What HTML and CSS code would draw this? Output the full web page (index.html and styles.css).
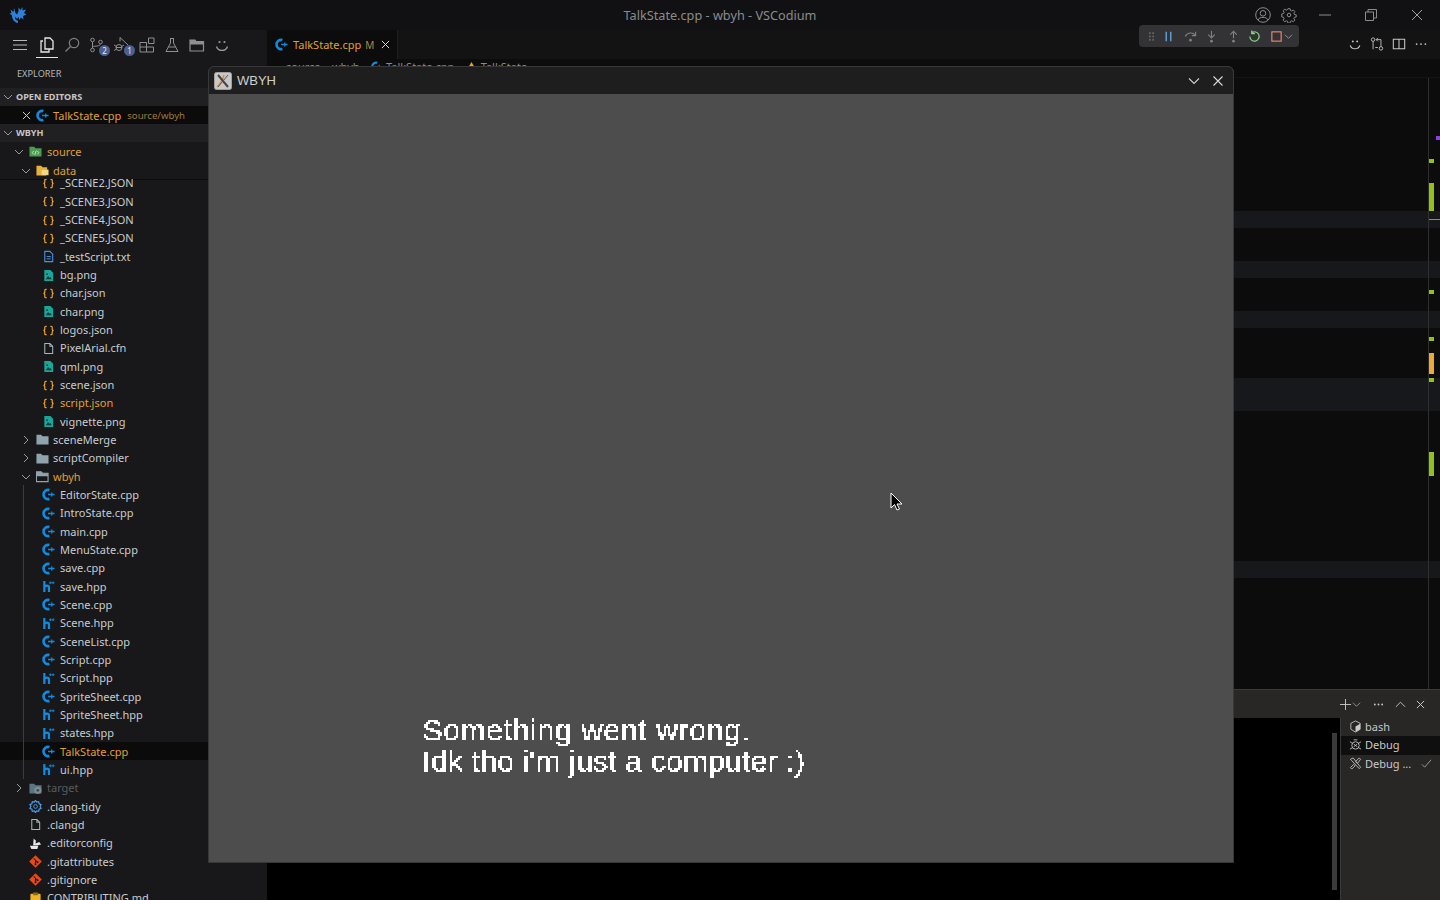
FILE: index.html
```html
<!DOCTYPE html>
<html lang="en">
<head>
<meta charset="utf-8">
<title>TalkState.cpp - wbyh - VSCodium</title>
<link rel="stylesheet" href="styles.css">
</head>
<body>
<svg class="defs" width="0" height="0" aria-hidden="true">
  <defs>
    <filter id="pixel" x="0" y="0" width="1" height="1" color-interpolation-filters="sRGB">
      <feFlood x="0" y="0" width="1" height="1" flood-color="#fff"/>
      <feComposite width="2" height="2"/>
      <feTile result="grid"/>
      <feComposite in="SourceGraphic" in2="grid" operator="in" result="dots"/>
      <feOffset in="dots" dx="1" dy="0" result="d1"/>
      <feOffset in="dots" dx="0" dy="1" result="d2"/>
      <feOffset in="dots" dx="1" dy="1" result="d3"/>
      <feMerge result="m"><feMergeNode in="dots"/><feMergeNode in="d1"/><feMergeNode in="d2"/><feMergeNode in="d3"/></feMerge>
      <feComponentTransfer in="m"><feFuncA type="discrete" tableValues="0 1 1 1"/></feComponentTransfer>
    </filter>
    <symbol id="cpp" viewBox="0 0 14 14"><path d="M8 2.200A5 5 0 1 0 8 11.800" fill="none" stroke="#0f8ce0" stroke-width="2.800"/><path d="M6.500 7h7M10.500 4.800v4.400" stroke="#0f8ce0" stroke-width="1.400" fill="none"/></symbol>
    <symbol id="hpp" viewBox="0 0 14 14"><path d="M2.500 1v12M2.500 7.500C3.500 5.500 7.500 5.300 7.500 8v5" fill="none" stroke="#0f8ce0" stroke-width="2.400"/><path d="M7.500 3h6M9 1.500v3M12 1.500v3" stroke="#0f8ce0" stroke-width="1" fill="none"/></symbol>
    <symbol id="json" viewBox="0 0 14 14"><path d="M5 2.500H4Q3 2.500 3 3.500V5.500Q3 7 1.500 7Q3 7 3 8.500V10.500Q3 11.500 4 11.500H5M9 2.500H10Q11 2.500 11 3.500V5.500Q11 7 12.500 7Q11 7 11 8.500V10.500Q11 11.500 10 11.500H9" fill="none" stroke="#e9a22c" stroke-width="1.300"/></symbol>
    <symbol id="png" viewBox="0 0 14 14"><path d="M2.500 1H9L12 4V13H2.500Z" fill="#1aa79a"/><path d="M4 11L6.500 7.500 8 9.500 9 8.500 10.500 11Z" fill="#0b3a38"/><circle cx="5.500" cy="5.500" r="1" fill="#0b3a38"/></symbol>
    <symbol id="txt" viewBox="0 0 14 14"><path d="M3 1.500H8.500L11.500 4.500V12.500H3Z" fill="none" stroke="#4a90d9" stroke-width="1.200"/><path d="M5 7h4.500M5 9.500h4.500" stroke="#4a90d9"/></symbol>
    <symbol id="file" viewBox="0 0 14 14"><path d="M3 1.500H8.500L11.500 4.500V12.500H3ZM8.500 1.500V4.500H11.500" fill="none" stroke="#a7b5bd" stroke-width="1.100"/></symbol>
    <symbol id="folder" viewBox="0 0 14 14"><path d="M.5 2H5.500L7 3.500H13.500V12.500H.5Z" fill="#90a4ae"/></symbol>
    <symbol id="folderopen" viewBox="0 0 14 14"><path d="M.5 2H5.500L7 3.500H13V12.500H.5ZM.5 6H13" fill="none" stroke="#90a4ae" stroke-width="1.200"/><path d="M.5 2H5.500L7 3.500H13V6H.5Z" fill="#90a4ae"/></symbol>
    <symbol id="foldersrc" viewBox="0 0 14 14"><path d="M.5 2H5.500L7 3.500H13.500V12.500H.5Z" fill="#4d9a51"/><path d="M5 6.500L3.500 8.300 5 10M9 6.500L10.500 8.300 9 10M7.800 6L6.300 10.500" fill="none" stroke="#c4ecc4"/></symbol>
    <symbol id="folderdata" viewBox="0 0 14 14"><path d="M.5 12.500V2H5.500L7 3.500H12V6H3.500L.5 12.500H11L13.500 6H3.500" fill="#e7b23c"/><rect x="6" y="6.500" width="7.500" height="5.500" fill="#f3d789"/></symbol>
    <symbol id="foldertarget" viewBox="0 0 14 14"><path d="M.5 2H5.500L7 3.500H13.500V12.500H.5Z" fill="#5e7681"/><circle cx="9.500" cy="9" r="3.800" fill="#7e8e96"/><circle cx="9.500" cy="9" r="1.500" fill="#3d4a50"/></symbol>
    <symbol id="tidy" viewBox="0 0 14 14"><path d="M7 .5L8.200 2.200 10.400 1.800 10.900 4 13 5 12 7 13 9 10.900 10 10.400 12.200 8.200 11.800 7 13.500 5.800 11.800 3.600 12.200 3.100 10 1 9 2 7 1 5 3.100 4 3.600 1.800 5.800 2.200Z" fill="none" stroke="#4a9de8" stroke-width="1.300"/><circle cx="7" cy="7" r="2" fill="none" stroke="#4a9de8"/></symbol>
    <symbol id="editorconfig" viewBox="0 0 14 14"><path d="M1 9.500H10L9 13H2.500ZM4.500 9L5 1.500 7.500 4 7 7 11 5.500 13 8 9.500 9Z" fill="#e8e8e8"/></symbol>
    <symbol id="git" viewBox="0 0 14 14"><path d="M7 .2L13.800 7 7 13.800 .2 7Z" fill="#e64a19"/><path d="M5 3.500L9.200 7.800M7 5.800V10" stroke="#1a1a1c" stroke-width="1.100"/><circle cx="7" cy="10" r="1.100" fill="#1a1a1c"/><circle cx="9.200" cy="7.800" r="1.100" fill="#1a1a1c"/></symbol>
    <symbol id="md" viewBox="0 0 14 14"><rect x="1.500" y="2" width="11" height="12" rx="1" fill="#f0b429"/><rect x="4.500" y="0.500" width="5" height="3" fill="#8a6a12"/></symbol>
    <symbol id="chevd" viewBox="0 0 10 10"><path d="M1 3l4 4 4-4" fill="none" stroke="#9a9a9a" stroke-width="1"/></symbol>
    <symbol id="chevr" viewBox="0 0 10 10"><path d="M3 1l4 4-4 4" fill="none" stroke="#9a9a9a" stroke-width="1"/></symbol>
    <symbol id="x" viewBox="0 0 10 10"><path d="M1 1l8 8M9 1l-8 8" fill="none" stroke="currentColor" stroke-width="1.100"/></symbol>
    <symbol id="smile" viewBox="0 0 16 16"><path d="M2.500 9.500A5.800 5.800 0 0 0 13.500 9.500" fill="none" stroke="currentColor" stroke-width="1.300"/><circle cx="5.500" cy="5" r="1.100" fill="currentColor"/><circle cx="10.500" cy="5" r="1.100" fill="currentColor"/></symbol>
  </defs>
</svg>

<div class="app">
  <header class="titlebar">
    <svg class="logo" viewBox="0 0 18 18"><path d="M9 17C5 16.500 3 13 3 9.500L.5 7.500 2.500 7 1.500 3.500 4.500 6 5 2 6.500 7 8 8.500 9.500 5 9.500 1.500 11.500 4 13.500 1 13.500 4.500 17 3.500 15 7 17.500 8.500 14 10 14.500 13.500 12 11.500 10.500 14 9.500 11 8 13 6 10.500 6.500 13.500 9 15Z" fill="#2f7fd6"/></svg>
    <div class="wintitle">TalkState.cpp - wbyh - VSCodium</div>
    <div class="titleicons">
      <svg class="ti account" viewBox="0 0 16 16"><circle cx="8" cy="8" r="7.300" fill="none" stroke="#8c8c8c"/><circle cx="8" cy="6.300" r="2.800" fill="none" stroke="#8c8c8c"/><path d="M3 13C4 9.500 12 9.500 13 13" fill="none" stroke="#8c8c8c"/></svg>
      <svg class="ti gear" viewBox="0 0 16 16"><path d="M6.800 1h2.400l.4 2 1.500.6 1.700-1.100 1.700 1.700-1.100 1.700.6 1.500 2 .4v2.400l-2 .4-.6 1.500 1.100 1.700-1.700 1.700-1.700-1.100-1.500.6-.4 2H6.800l-.4-2-1.500-.6-1.700 1.100-1.700-1.700 1.100-1.700-.6-1.500-2-.4V6.800l2-.4.6-1.500-1.100-1.700 1.700-1.700 1.700 1.100 1.500-.6z" transform="translate(0.800 0.800) scale(.9)" fill="none" stroke="#8c8c8c" stroke-width="1.100"/><circle cx="8" cy="8" r="1.800" fill="none" stroke="#8c8c8c"/></svg>
      <svg class="wc wmin" viewBox="0 0 12 12"><path d="M0 6h12" stroke="#8c8c8c"/></svg>
      <svg class="wc wmax" viewBox="0 0 12 12"><path d="M.5 3h8v8.500h-8zM3 3V.5h8.500V9H9" fill="none" stroke="#8c8c8c"/></svg>
      <svg class="wc wclose" viewBox="0 0 12 12"><path d="M1 1l10 10M11 1L1 11" stroke="#a0a0a0" fill="none"/></svg>
    </div>
  </header>

  <div class="main">
    <aside class="sidebar">
      <nav class="activity">
        <div class="act"><svg viewBox="0 0 16 16"><path d="M1 3.500h14M1 8h14M1 12.500h14" stroke="#b8b8b8" fill="none"/></svg></div>
        <div class="act on"><svg viewBox="0 0 16 16"><path d="M6 1h5l3 3v8H6zM4 4H2v11h8v-3" fill="none" stroke="#e6e6e6" stroke-width="1.300"/></svg></div>
        <div class="act"><svg viewBox="0 0 16 16"><circle cx="10" cy="6" r="4.700" fill="none" stroke="#7f7f7f" stroke-width="1.200"/><path d="M6.500 9.500L1.500 14.500" stroke="#7f7f7f" stroke-width="1.200"/></svg></div>
        <div class="act"><svg viewBox="0 0 16 16"><circle cx="3.500" cy="3" r="1.800" fill="none" stroke="#8f8f8f"/><circle cx="3.500" cy="13" r="1.800" fill="none" stroke="#8f8f8f"/><circle cx="11.500" cy="5" r="1.800" fill="none" stroke="#8f8f8f"/><path d="M3.500 5v6M11.500 7C11 9.500 6 9 3.500 9.500" fill="none" stroke="#8f8f8f"/></svg><span class="badge">2</span></div>
        <div class="act"><svg viewBox="0 0 16 16"><path d="M6 .5l8 7.500M6 .5v4" fill="none" stroke="#8f8f8f"/><circle cx="5" cy="10.500" r="3" fill="none" stroke="#8f8f8f"/><path d="M0 8l2.500 1.500M0 13.500l2.500-1.500M10 8l-2.500 1.500M2 10.500h6" stroke="#8f8f8f"/></svg><span class="badge">1</span></div>
        <div class="act"><svg viewBox="0 0 16 16"><path d="M1 5.500h6.500V15H1zM1 10h13.500v5H7.500M7.500 5.500V10M9.500 1H15v5.500H9.500z" fill="none" stroke="#8f8f8f"/></svg></div>
        <div class="act"><svg viewBox="0 0 16 16"><path d="M6 1.500h4M6.500 1.500V6L2 14.500h12L9.500 6V1.500M4.500 10h7" fill="none" stroke="#8f8f8f"/></svg></div>
        <div class="act"><svg viewBox="0 0 16 16"><path d="M1 3h5l1 1.500h7.500V14H1zM1 7h13.500" fill="none" stroke="#8f8f8f" stroke-width="1.200"/><path d="M1 3h5l1 1.500h7.500V7H1z" fill="#8f8f8f"/></svg></div>
        <div class="act smile"><svg viewBox="0 0 16 16"><use href="#smile"/></svg></div>
      </nav>
      <div class="explorer">EXPLORER</div>
      <div class="sec">OPEN EDITORS<svg class="secchev"><use href="#chevd"/></svg></div>
      <div class="row openrow"><svg class="openx"><use href="#x"/></svg><svg class="ico"><use href="#cpp"/></svg><span class="mod">TalkState.cpp</span><span class="path">source/wbyh</span></div>
      <div class="sec">WBYH<svg class="secchev"><use href="#chevd"/></svg></div>
      <div class="row c1"><svg class="chev"><use href="#chevd"/></svg><svg class="ico"><use href="#foldersrc"/></svg><span class="mod">source</span></div>
      <div class="row c2 stickyrow"><svg class="chev"><use href="#chevd"/></svg><svg class="ico"><use href="#folderdata"/></svg><span class="mod">data</span></div>
      <div class="tree">
        <div class="treeinner">
          <div class="row l3"><svg class="ico"><use href="#json"/></svg><span>_SCENE2.JSON</span></div>
          <div class="row l3"><svg class="ico"><use href="#json"/></svg><span>_SCENE3.JSON</span></div>
          <div class="row l3"><svg class="ico"><use href="#json"/></svg><span>_SCENE4.JSON</span></div>
          <div class="row l3"><svg class="ico"><use href="#json"/></svg><span>_SCENE5.JSON</span></div>
          <div class="row l3"><svg class="ico"><use href="#txt"/></svg><span>_testScript.txt</span></div>
          <div class="row l3"><svg class="ico"><use href="#png"/></svg><span>bg.png</span></div>
          <div class="row l3"><svg class="ico"><use href="#json"/></svg><span>char.json</span></div>
          <div class="row l3"><svg class="ico"><use href="#png"/></svg><span>char.png</span></div>
          <div class="row l3"><svg class="ico"><use href="#json"/></svg><span>logos.json</span></div>
          <div class="row l3"><svg class="ico"><use href="#file"/></svg><span>PixelArial.cfn</span></div>
          <div class="row l3"><svg class="ico"><use href="#png"/></svg><span>qml.png</span></div>
          <div class="row l3"><svg class="ico"><use href="#json"/></svg><span>scene.json</span></div>
          <div class="row l3"><svg class="ico"><use href="#json"/></svg><span class="mod">script.json</span></div>
          <div class="row l3"><svg class="ico"><use href="#png"/></svg><span>vignette.png</span></div>
          <div class="row c2"><svg class="chev"><use href="#chevr"/></svg><svg class="ico"><use href="#folder"/></svg><span>sceneMerge</span></div>
          <div class="row c2"><svg class="chev"><use href="#chevr"/></svg><svg class="ico"><use href="#folder"/></svg><span>scriptCompiler</span></div>
          <div class="row c2"><svg class="chev"><use href="#chevd"/></svg><svg class="ico"><use href="#folderopen"/></svg><span class="mod">wbyh</span></div>
          <div class="guided">
            <div class="row l3"><svg class="ico"><use href="#cpp"/></svg><span>EditorState.cpp</span></div>
            <div class="row l3"><svg class="ico"><use href="#cpp"/></svg><span>IntroState.cpp</span></div>
            <div class="row l3"><svg class="ico"><use href="#cpp"/></svg><span>main.cpp</span></div>
            <div class="row l3"><svg class="ico"><use href="#cpp"/></svg><span>MenuState.cpp</span></div>
            <div class="row l3"><svg class="ico"><use href="#cpp"/></svg><span>save.cpp</span></div>
            <div class="row l3"><svg class="ico"><use href="#hpp"/></svg><span>save.hpp</span></div>
            <div class="row l3"><svg class="ico"><use href="#cpp"/></svg><span>Scene.cpp</span></div>
            <div class="row l3"><svg class="ico"><use href="#hpp"/></svg><span>Scene.hpp</span></div>
            <div class="row l3"><svg class="ico"><use href="#cpp"/></svg><span>SceneList.cpp</span></div>
            <div class="row l3"><svg class="ico"><use href="#cpp"/></svg><span>Script.cpp</span></div>
            <div class="row l3"><svg class="ico"><use href="#hpp"/></svg><span>Script.hpp</span></div>
            <div class="row l3"><svg class="ico"><use href="#cpp"/></svg><span>SpriteSheet.cpp</span></div>
            <div class="row l3"><svg class="ico"><use href="#hpp"/></svg><span>SpriteSheet.hpp</span></div>
            <div class="row l3"><svg class="ico"><use href="#hpp"/></svg><span>states.hpp</span></div>
            <div class="row l3 selected"><svg class="ico"><use href="#cpp"/></svg><span class="mod">TalkState.cpp</span></div>
            <div class="row l3"><svg class="ico"><use href="#hpp"/></svg><span>ui.hpp</span></div>
          </div>
          <div class="row c1"><svg class="chev"><use href="#chevr"/></svg><svg class="ico"><use href="#foldertarget"/></svg><span class="dim">target</span></div>
          <div class="row l1"><svg class="ico"><use href="#tidy"/></svg><span>.clang-tidy</span></div>
          <div class="row l1"><svg class="ico"><use href="#file"/></svg><span>.clangd</span></div>
          <div class="row l1"><svg class="ico"><use href="#editorconfig"/></svg><span>.editorconfig</span></div>
          <div class="row l1"><svg class="ico"><use href="#git"/></svg><span>.gitattributes</span></div>
          <div class="row l1"><svg class="ico"><use href="#git"/></svg><span>.gitignore</span></div>
          <div class="row l1"><svg class="ico"><use href="#md"/></svg><span>CONTRIBUTING.md</span></div>
        </div>
      </div>
    </aside>

    <main class="workbench">
      <div class="tabs">
        <div class="tab"><svg class="ico"><use href="#cpp"/></svg><span class="mod">TalkState.cpp</span><span class="tabm">M</span><svg class="tabx"><use href="#x"/></svg></div>
        <div class="tabactions">
          <svg class="ta" viewBox="0 0 16 16"><use href="#smile"/></svg>
          <svg class="ta" viewBox="0 0 16 16"><circle cx="3.500" cy="3" r="2" fill="none" stroke="#c8c8c8"/><circle cx="12.500" cy="13" r="2" fill="none" stroke="#c8c8c8"/><path d="M3.500 5v9M12.500 11V3H7M9 1L7 3l2 2M6 12h3" fill="none" stroke="#c8c8c8"/></svg>
          <svg class="ta" viewBox="0 0 16 16"><path d="M1.500 2.500h13v11h-13zM8 2.500v11" fill="none" stroke="#c8c8c8" stroke-width="1.200"/></svg>
          <svg class="ta" viewBox="0 0 16 16"><circle cx="3" cy="8" r="1" fill="#c8c8c8"/><circle cx="8" cy="8" r="1" fill="#c8c8c8"/><circle cx="13" cy="8" r="1" fill="#c8c8c8"/></svg>
        </div>
      </div>
      <div class="crumbs"><span>source</span><span>›</span><span>wbyh</span><span>›</span><svg class="ico"><use href="#cpp"/></svg><span class="crumbfile">TalkState.cpp</span><span>›</span><svg class="crumbsym" viewBox="0 0 12 12"><path d="M6 1l4 7H2z" fill="#e0a033"/></svg><span>TalkState</span></div>
      <div class="editor">
        <div class="band" style="top:133px;height:17px"></div>
        <div class="band" style="top:183px;height:17px"></div>
        <div class="band" style="top:233px;height:17px"></div>
        <div class="band" style="top:300px;height:33px"></div>
        <div class="band" style="top:483px;height:17px"></div>
        <div class="ruler">
          <i class="mark purple" style="top:58px;height:4px"></i>
          <i class="mark green" style="top:81px;height:4px"></i>
          <i class="mark green" style="top:105px;height:28px"></i>
          <i class="mark cursorline" style="top:141px;height:1px"></i>
          <i class="mark green" style="top:212px;height:4px"></i>
          <i class="mark green" style="top:259px;height:4px"></i>
          <i class="mark orange" style="top:275px;height:21px"></i>
          <i class="mark green" style="top:300px;height:4px"></i>
          <i class="mark green" style="top:374px;height:24px"></i>
        </div>
      </div>
      <section class="panel">
        <div class="panelhead">
          <svg class="pi plus" viewBox="0 0 12 12"><path d="M6 0v12M0 6h12" stroke="#c8c8c8" fill="none"/></svg>
          <svg class="pi pchev"><use href="#chevd"/></svg>
          <svg class="pi pdots" viewBox="0 0 12 12"><circle cx="2" cy="6" r="1" fill="#c8c8c8"/><circle cx="6" cy="6" r="1" fill="#c8c8c8"/><circle cx="10" cy="6" r="1" fill="#c8c8c8"/></svg>
          <svg class="pi pup" viewBox="0 0 12 12"><path d="M1 8.500l5-5 5 5" fill="none" stroke="#c8c8c8"/></svg>
          <svg class="pi pclose"><use href="#x"/></svg>
        </div>
        <div class="panelbody">
          <div class="terminal"><div class="scrollbar"></div></div>
          <div class="termlist">
            <div class="termrow"><svg class="tic" viewBox="0 0 14 14"><path d="M7 1l5 2.500V10l-5 3-5-3V3.500z" fill="none" stroke="#bbb"/><path d="M7 7l5-3v6l-5 3z" fill="#ccc"/></svg><span>bash</span></div>
            <div class="termrow active"><svg class="tic" viewBox="0 0 14 14"><circle cx="7" cy="8" r="4" fill="none" stroke="#bbb"/><path d="M5 6.500l4 3M9 6.500l-4 3M1 4l3 2M13 4l-3 2M1 12l2.500-1.500M13 12l-2.500-1.500M5 2h4" stroke="#bbb" fill="none"/></svg><span>Debug</span></div>
            <div class="termrow"><svg class="tic" viewBox="0 0 14 14"><path d="M1.500 2.500l3-1.500L12.500 11 11 12.500 3 4zM12.500 2.500L11 1 7 5 9 7zM5 8L1.500 11.500 3 13 6.500 9.500z" fill="none" stroke="#bbb"/></svg><span>Debug ...</span><svg class="check" viewBox="0 0 12 12"><path d="M1 7l3 3 7-8" fill="none" stroke="#a0a0a0"/></svg></div>
          </div>
        </div>
      </section>
    </main>
  </div>
</div>

<div class="debugbar">
  <svg class="dg" viewBox="0 0 6 10"><g fill="#6a6a6a"><rect width="2" height="2"/><rect x="4" width="2" height="2"/><rect y="4" width="2" height="2"/><rect x="4" y="4" width="2" height="2"/><rect y="8" width="2" height="2"/><rect x="4" y="8" width="2" height="2"/></g></svg>
  <svg class="db" viewBox="0 0 14 14"><path d="M4.500 2v10M9.500 2v10" stroke="#75beff" stroke-width="1.200"/></svg>
  <svg class="db" viewBox="0 0 14 14"><path d="M1.500 7C3 2.500 9.500 2 12 5.500M12.500 2v4h-4" fill="none" stroke="#808080" stroke-width="1.200"/><circle cx="7" cy="11" r="1.500" fill="#808080"/></svg>
  <svg class="db" viewBox="0 0 14 14"><path d="M7 1v7M3.500 5L7 8.500 10.500 5" fill="none" stroke="#808080" stroke-width="1.200"/><circle cx="7" cy="12" r="1.500" fill="#808080"/></svg>
  <svg class="db" viewBox="0 0 14 14"><path d="M7 9V2M3.500 5L7 1.500 10.500 5" fill="none" stroke="#808080" stroke-width="1.200"/><circle cx="7" cy="12" r="1.500" fill="#808080"/></svg>
  <svg class="db" viewBox="0 0 14 14"><path d="M4 3A5 5 0 1 1 2 7M4 .5V4h3.500" fill="none" stroke="#89d185" stroke-width="1.300"/></svg>
  <svg class="db" viewBox="0 0 14 14"><rect x="2" y="2" width="10" height="10" fill="none" stroke="#f48771" stroke-width="1.200"/></svg>
  <svg class="dc"><use href="#chevd"/></svg>
</div>

<div class="gamewin">
  <div class="gamebar">
    <svg class="xicon" viewBox="0 0 18 18"><rect x=".5" y=".5" width="17" height="17" rx="2" fill="#c8c8c8" stroke="#a0a0a0"/><path d="M3 15C6 12 9 7 10 3" stroke="#e8893c" stroke-width="1.500" fill="none"/><path d="M4 3l10 12" stroke="#444" stroke-width="2" fill="none"/><path d="M14 3L4 15" stroke="#555" fill="none"/></svg>
    <span class="gametitle">WBYH</span>
    <svg class="gb gbdown" viewBox="0 0 12 12"><path d="M1 3.500l5 5 5-5" fill="none" stroke="#d0d0d0" stroke-width="1.100"/></svg>
    <svg class="gb" viewBox="0 0 12 12"><path d="M1.500 1.500l9 9M10.500 1.500l-9 9" fill="none" stroke="#d8d8d8" stroke-width="1.100"/></svg>
  </div>
  <div class="gamebody">
    <div class="speech"><div class="line1">Something went wrong.</div><div class="line2">Idk tho i'm just a computer :)</div></div>
  </div>
</div>

<svg class="mouse" viewBox="0 0 14 22"><path d="M1 1v15l3.500-3.500L7 18l2.500-1-2.500-5h5z" fill="#000" stroke="#fff"/></svg>
</body>
</html>
```
FILE: styles.css
```css
* { box-sizing: border-box; }
html, body { margin: 0; height: 100%; overflow: hidden; background: #0c0c0c; }
body { font-family: "Noto Sans", sans-serif; font-size: 11px; color: #c8ccd0; }
.defs { position: absolute; }
.app { display: flex; flex-direction: column; width: 1440px; height: 900px; }

.titlebar { height: 30px; flex: none; background: #111113; display: flex; align-items: center; position: relative; }
.logo { width: 18px; height: 18px; margin-left: 9px; }
.wintitle { position: absolute; left: 0; right: 0; text-align: center; color: #8b8b8b; font-size: 12.7px; line-height: 30px; }
.titleicons { margin-left: auto; display: flex; align-items: center; }
.ti { width: 16px; height: 16px; }
.account { margin-right: 10px; }
.gear { margin-right: 22px; }
.wc { width: 12px; height: 12px; }
.wmin { margin-right: 34px; }
.wmax { margin-right: 34px; }
.wclose { margin-right: 17px; }

.main { flex: 1; display: flex; min-height: 0; }
.sidebar { width: 267px; flex: none; background: #18181a; display: flex; flex-direction: column; min-height: 0; }
.activity { height: 29px; flex: none; display: flex; padding-left: 7px; background: #18181a; }
.act { width: 25px; position: relative; display: flex; align-items: center; justify-content: center; }
.act svg { width: 16px; height: 16px; }
.act.on::after { content: ""; position: absolute; left: 2px; right: 2px; bottom: 1px; height: 1px; background: #e6e6e6; }
.act.on { width: 26px; margin-left: 2px; margin-right: -1px; }
.act.smile { color: #9a9a9a; }
.badge { position: absolute; left: 15px; top: 15px; width: 11px; height: 11px; border-radius: 50%; background: #4a6090; color: #e8e8e8; font-size: 8px; line-height: 11px; text-align: center; }
.explorer { height: 29px; flex: none; padding-left: 17px; font-size: 9.2px; line-height: 29px; color: #b5b5b5; }
.sec { height: 18px; flex: none; background: #202022; font-size: 9.1px; font-weight: 700; line-height: 17px; padding-left: 16px; color: #c5c5c5; position: relative; }
.secchev { position: absolute; left: 3px; top: 4px; width: 10px; height: 10px; }

.row { height: 18.34px; flex: none; display: flex; align-items: center; white-space: nowrap; line-height: 18px; padding-top: 1px; }
.ico { width: 13px; height: 13px; flex: none; margin-right: 5px; }
.chev { width: 10px; height: 10px; flex: none; margin-right: 5px; }
.c1 { padding-left: 14px; }
.c2 { padding-left: 21px; }
.c2 .ico { margin-right: 4px; }
.l1 { padding-left: 29px; }
.l3 { padding-left: 42px; }
.mod { color: #e0a033; }
.dim { color: #5b5b5b; }
.selected { background: #0b0b0c; }
.openrow { height: 18px; background: #0b0b0c; padding-left: 22px; }
.openrow .ico { margin-left: -1px; margin-right: 4px; }
.openx { width: 9px; height: 9px; margin-right: 6px; color: #d0d0d0; flex: none; }
.path { margin-left: 6px; font-size: 9.6px; color: #9c7a3a; }
.stickyrow { height: 19px; padding-top: 2px; }
.tree { flex: 1; min-height: 0; overflow: hidden; box-shadow: inset 0 1px 0 #0c0c0c; }
.treeinner { margin-top: -5.6px; }
.guided { position: relative; }
.guided::before { content: ""; position: absolute; left: 23px; top: 0; bottom: 0; width: 1px; background: #3c3c3e; }

.workbench { flex: 1; min-width: 0; display: flex; flex-direction: column; background: #0c0c0c; }
.tabs { height: 29px; flex: none; display: flex; background: #131314; }
.tab { width: 131px; display: flex; align-items: center; padding-left: 8px; background: #0c0c0c; border-right: 1px solid #1e1e1e; }
.tab .ico { margin-right: 5px; }
.tabm { margin-left: 4px; font-size: 10px; color: #b08a4a; }
.tabx { width: 9px; height: 9px; margin-left: auto; margin-right: 7px; color: #d8d8d8; }
.tabactions { margin-left: auto; display: flex; align-items: center; gap: 8px; padding-right: 12px; color: #c8c8c8; padding-bottom: 1px; }
.ta { width: 14px; height: 14px; }
.crumbs { height: 19px; flex: none; display: flex; gap: 4px; align-items: center; padding-left: 19px; padding-bottom: 3px; font-size: 11px; color: #8a8a8a; border-bottom: 1px solid #141414; }
.crumbs .ico { margin: 0; width: 11px; height: 11px; }
.crumbsym { width: 11px; height: 11px; }
.crumbfile { margin-right: 0; }
.editor { flex: 1; position: relative; min-height: 0; }
.band { position: absolute; left: 0; right: 0; background: #17181b; }
.ruler { position: absolute; right: 0; top: 0; bottom: 0; width: 12px; border-left: 1px solid #2f2f2f; }
.mark { position: absolute; left: 0; width: 5px; }
.green { background: #8fc31a; }
.orange { background: #eea73b; }
.purple { background: #8a3fe0; left: 7px; width: 4px; }
.cursorline { background: #8a8a8a; width: 11px; }

.panel { height: 211px; flex: none; display: flex; flex-direction: column; border-top: 1px solid #3b3b3b; background: #292626; }
.panelhead { height: 28px; flex: none; position: relative; display: flex; align-items: center; justify-content: flex-end; padding-right: 15px; }
.pi { width: 11px; height: 11px; flex: none; }
.plus { margin-right: 1px; }
.pchev { width: 9px; height: 9px; margin-right: 12px; }
.pdots { margin-right: 11px; }
.pup { margin-right: 10px; }
.pclose { width: 9px; height: 9px; color: #c8c8c8; }
.panelbody { flex: 1; display: flex; min-height: 0; }
.terminal { flex: 1; background: #000; position: relative; }
.scrollbar { position: absolute; right: 3px; top: 15px; bottom: 10px; width: 5px; background: #3a3a3a; }
.termlist { width: 100px; flex: none; border-left: 1px solid #3a3a3a; }
.termrow { height: 18.34px; display: flex; align-items: center; padding-left: 8px; font-size: 11px; color: #c8c8c8; }
.termrow:nth-child(-n+2) { padding-bottom: 2px; }
.termrow.active { background: #0f0f0f; }
.tic { width: 13px; height: 13px; margin-right: 3px; flex: none; }
.check { width: 11px; height: 11px; margin-left: auto; margin-right: 8px; }

.debugbar { position: absolute; left: 1139px; top: 25px; width: 160px; height: 22px; background: #333335; border-radius: 4px; display: flex; align-items: center; padding-left: 10px; }
.dg { width: 5px; height: 9px; margin-right: 8px; }
.db { width: 13px; height: 13px; margin-right: 8.6px; }
.dc { width: 9px; height: 9px; margin-left: -8px; }

.gamewin { position: absolute; left: 208px; top: 66px; width: 1026px; height: 797px; border: 1px solid #383838; border-radius: 6px 6px 0 0; display: flex; flex-direction: column; background: #4d4d4d; overflow: hidden; }
.gamebar { height: 27px; flex: none; background: #1e1e1e; display: flex; align-items: center; padding-left: 5px; padding-right: 9px; }
.xicon { width: 18px; height: 18px; margin-right: 5px; }
.gametitle { color: #cfcfcf; font-size: 13px; font-family: "Liberation Sans", sans-serif; margin-right: auto; }
.gb { width: 12px; height: 12px; }
.gbdown { margin-right: 12px; }
.gamebody { flex: 1; position: relative; }
.speech { position: absolute; left: 213px; top: 620px; font-family: "Liberation Sans", sans-serif; font-size: 30px; line-height: 31px; color: #fff; white-space: nowrap; filter: url(#pixel); padding: 0 8px 4px 0; }
.line1 { letter-spacing: 0.69px; }
.line2 { letter-spacing: 0.22px; }

.mouse { position: absolute; left: 890px; top: 492px; width: 14px; height: 22px; }
```
